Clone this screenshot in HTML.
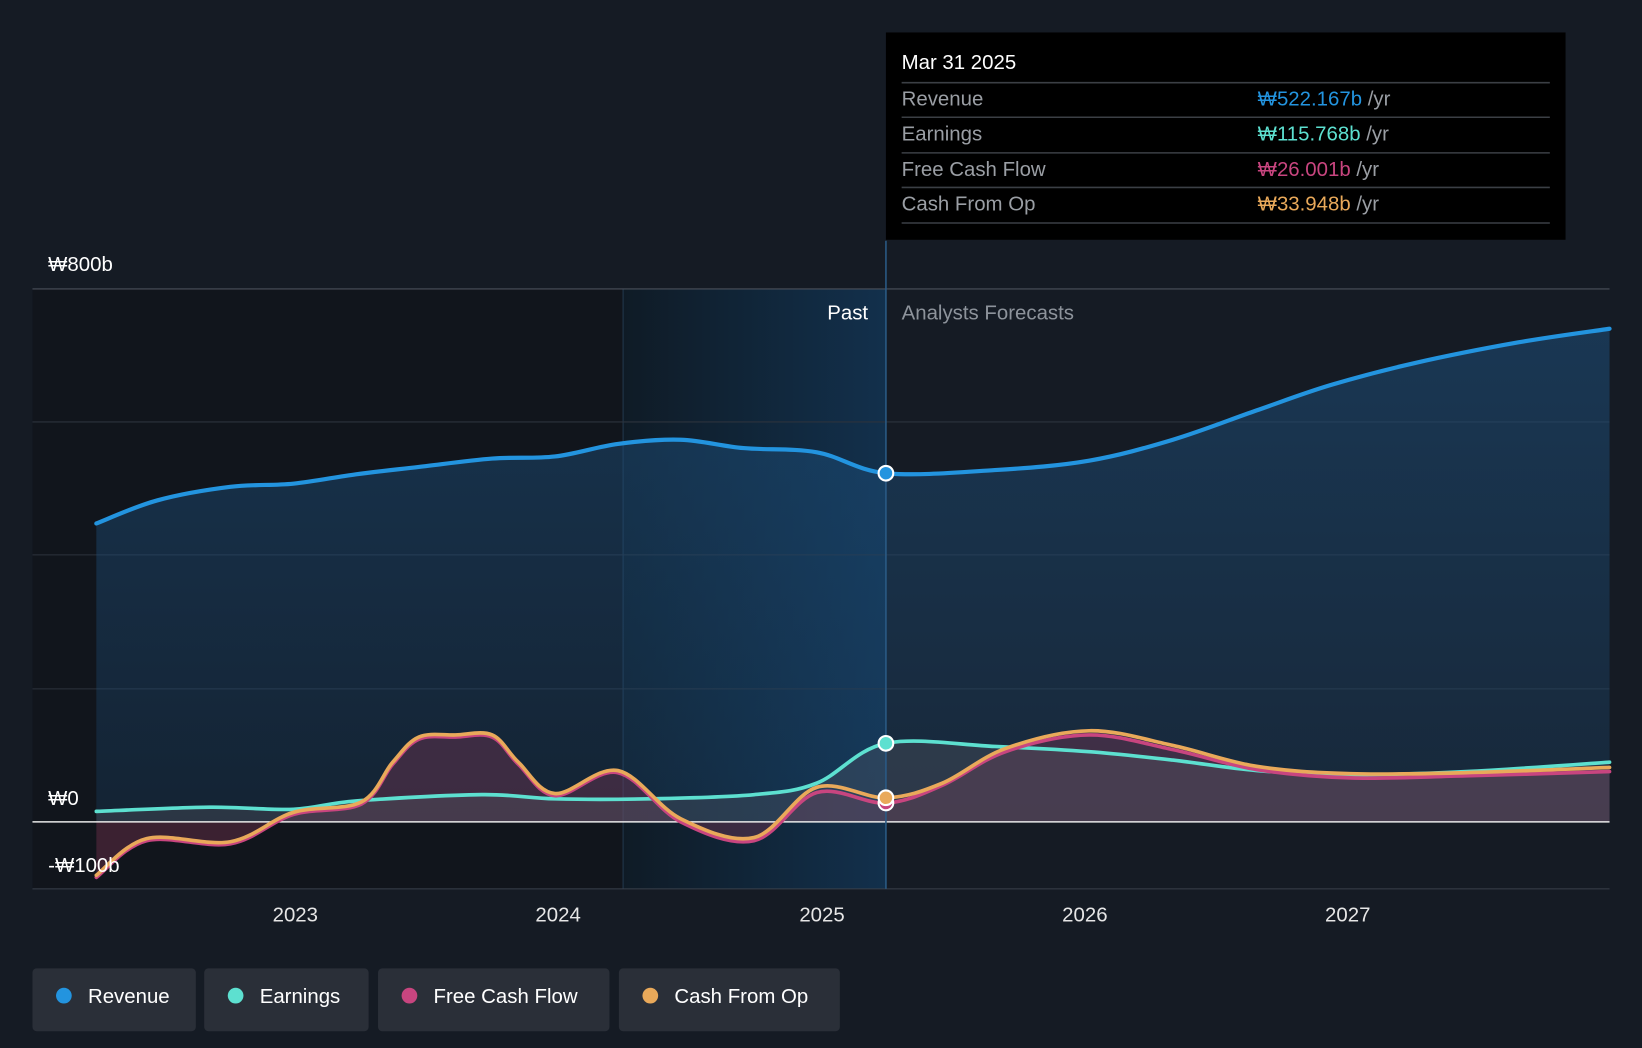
<!DOCTYPE html>
<html><head><meta charset="utf-8"><style>
html,body{margin:0;padding:0;background:#151b24;}
svg{display:block;font-family:"Liberation Sans",sans-serif;}
</style></head><body>
<svg width="1642" height="1048" viewBox="0 0 1568 1001" preserveAspectRatio="none">
<defs>
<linearGradient id="pb" x1="0" x2="1" y1="0" y2="0">
<stop offset="0" stop-color="#0f1b26"/><stop offset="1" stop-color="#12304c"/>
</linearGradient>
<linearGradient id="rv" x1="0" x2="0" y1="0" y2="1">
<stop offset="0" stop-color="#1d4e7a" stop-opacity="0.55"/><stop offset="1" stop-color="#1d4e7a" stop-opacity="0.25"/>
</linearGradient>
</defs>
<rect width="1568" height="1001" fill="#151b24"/>
<rect x="31" y="276" width="564" height="573" fill="#11151c"/>
<rect x="595" y="276" width="251" height="573" fill="url(#pb)"/>
<line x1="595" y1="276" x2="595" y2="849" stroke="#23384c" stroke-width="1"/>
<g stroke="#2c333d" stroke-width="1">
<line x1="31" y1="276" x2="1537" y2="276" stroke="#4a505a"/>
<line x1="31" y1="403" x2="1537" y2="403"/>
<line x1="31" y1="530" x2="1537" y2="530"/>
<line x1="31" y1="658" x2="1537" y2="658"/>
<line x1="31" y1="849" x2="1537" y2="849" stroke="#3a414b"/>
</g>
<path class="sm" fill="url(#rv)" data-close="1" data-p="92,500 150,478 220,465 280,462 340,453 400,446 470,438 530,436 590,424 650,420 710,428 780,432 846,452 950,449 1040,440 1120,420 1200,392 1270,368 1350,347 1450,327 1537,314"/>
<path class="sm" fill="#8a3a5a" fill-opacity="0.35" data-close="1" data-p="92,838 140,803 220,806 280,778 345,768 375,730 400,706 435,704 470,704 495,730 530,760 590,738 650,785 720,803 780,757 846,767 900,750 960,718 1040,702 1120,716 1200,735 1290,743 1400,741 1537,737"/>
<path class="sm" fill="#555a63" fill-opacity="0.35" data-close="1" data-p="92,775 200,771 280,773 340,765 460,759 530,763 620,763 720,759 780,748 846,710 950,713 1040,718 1120,726 1200,736 1290,740 1400,737 1537,728"/>
<line x1="31" y1="785" x2="1537" y2="785" stroke="#e8e8e8" stroke-width="1.5"/>
<line x1="846" y1="230" x2="846" y2="849" stroke="#2a5a85" stroke-width="1.5"/>
<g fill="none" stroke-linejoin="round" stroke-linecap="round">
<path class="sm" stroke="#2394df" stroke-width="4" data-p="92,500 150,478 220,465 280,462 340,453 400,446 470,438 530,436 590,424 650,420 710,428 780,432 846,452 950,449 1040,440 1120,420 1200,392 1270,368 1350,347 1450,327 1537,314"/>
<path class="sm" stroke="#5de0d0" stroke-width="3.5" data-p="92,775 200,771 280,773 340,765 460,759 530,763 620,763 720,759 780,748 846,710 950,713 1040,718 1120,726 1200,736 1290,740 1400,737 1537,728"/>
<path class="sm" stroke="#c8457f" stroke-width="3.5" data-p="92,838 140,803 220,806 280,778 345,768 375,730 400,706 435,704 470,704 495,730 530,760 590,738 650,785 720,803 780,757 846,767 900,750 960,718 1040,702 1120,716 1200,735 1290,743 1400,741 1537,737"/>
<path class="sm" stroke="#e9a95a" stroke-width="3.5" data-p="92,836 140,801 220,804 280,776 345,766 375,728 400,704 435,702 470,702 495,728 530,758 590,736 650,782 720,800 780,752 846,762 900,748 960,715 1040,698 1120,712 1200,732 1290,739 1400,738 1537,733"/>
</g>
<circle cx="846" cy="452" r="7" fill="#2394df" stroke="#fff" stroke-width="2"/>
<circle cx="846" cy="710" r="7" fill="#5de0d0" stroke="#fff" stroke-width="2"/>
<circle cx="846" cy="767" r="7" fill="#c8457f" stroke="#fff" stroke-width="2"/>
<circle cx="846" cy="762" r="7" fill="#e9a95a" stroke="#fff" stroke-width="2"/>
<g font-size="19.5" fill="#ffffff">
<text x="46" y="259">₩800b</text>
<text x="46" y="769">₩0</text>
<text x="46" y="833">-₩100b</text>
<text x="829" y="305" text-anchor="end">Past</text>
<text x="861" y="305" fill="#8d939b">Analysts Forecasts</text>
</g>
<g font-size="19.5" fill="#e6e6e6" text-anchor="middle">
<text x="282" y="880">2023</text><text x="533" y="880">2024</text><text x="785" y="880">2025</text><text x="1036" y="880">2026</text><text x="1287" y="880">2027</text>
</g>
<rect x="846" y="31" width="649" height="198" fill="#000"/>
<g font-size="19.5">
<text x="861" y="66" fill="#fff">Mar 31 2025</text>
<g stroke="#3b3f45" stroke-width="1.5">
<line x1="861" y1="79" x2="1480" y2="79"/><line x1="861" y1="112" x2="1480" y2="112"/><line x1="861" y1="146" x2="1480" y2="146"/><line x1="861" y1="179" x2="1480" y2="179"/><line x1="861" y1="213" x2="1480" y2="213"/>
</g>
<g fill="#9a9ea4">
<text x="861" y="101">Revenue</text><text x="861" y="134">Earnings</text><text x="861" y="168">Free Cash Flow</text><text x="861" y="201">Cash From Op</text>
</g>
<text x="1201" y="101" fill="#2394df">₩522.167b <tspan fill="#9a9ea4">/yr</tspan></text>
<text x="1201" y="134" fill="#5de0d0">₩115.768b <tspan fill="#9a9ea4">/yr</tspan></text>
<text x="1201" y="168" fill="#c8457f">₩26.001b <tspan fill="#9a9ea4">/yr</tspan></text>
<text x="1201" y="201" fill="#e9a95a">₩33.948b <tspan fill="#9a9ea4">/yr</tspan></text>
</g>
<g font-size="19.5" fill="#fff">
<rect x="31" y="925" width="156" height="60" rx="4" fill="#2a2f38"/>
<circle cx="61" cy="951" r="7.5" fill="#2394df"/><text x="84" y="958">Revenue</text>
<rect x="195" y="925" width="157" height="60" rx="4" fill="#2a2f38"/>
<circle cx="225" cy="951" r="7.5" fill="#5de0d0"/><text x="248" y="958">Earnings</text>
<rect x="361" y="925" width="221" height="60" rx="4" fill="#2a2f38"/>
<circle cx="391" cy="951" r="7.5" fill="#c8457f"/><text x="414" y="958">Free Cash Flow</text>
<rect x="591" y="925" width="211" height="60" rx="4" fill="#2a2f38"/>
<circle cx="621" cy="951" r="7.5" fill="#e9a95a"/><text x="644" y="958">Cash From Op</text>
</g>
</svg>
<script>
document.querySelectorAll('path.sm').forEach(function(el){
  var p=el.getAttribute('data-p').trim().split(/\s+/).map(function(s){return s.split(',').map(Number);});
  var d='M'+p[0][0]+','+p[0][1];
  for(var i=0;i<p.length-1;i++){
    var p0=p[i-1]||p[i],p1=p[i],p2=p[i+1],p3=p[i+2]||p2;
    var c1x=p1[0]+(p2[0]-p0[0])/6,c1y=p1[1]+(p2[1]-p0[1])/6;
    var c2x=p2[0]-(p3[0]-p1[0])/6,c2y=p2[1]-(p3[1]-p1[1])/6;
    d+=' C'+c1x+','+c1y+' '+c2x+','+c2y+' '+p2[0]+','+p2[1];
  }
  if(el.getAttribute('data-close')){d+=' L'+p[p.length-1][0]+',785 L'+p[0][0]+',785 Z';}
  el.setAttribute('d',d);
});
</script>
</body></html>
